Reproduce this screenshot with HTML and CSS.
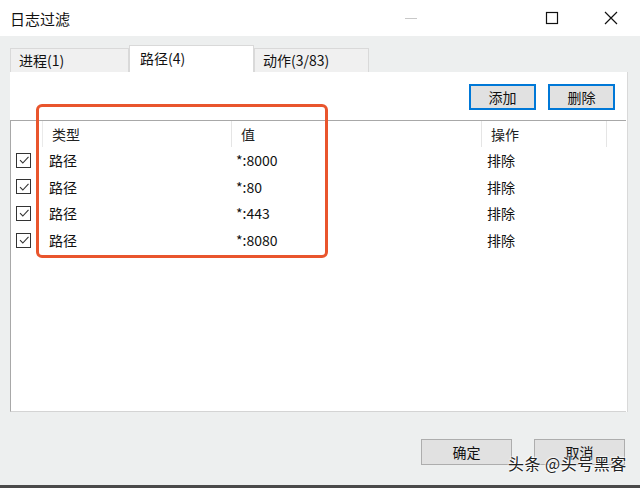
FILE: index.html
```html
<!DOCTYPE html>
<html>
<head>
<meta charset="utf-8">
<link rel="stylesheet" href="styles.css">
</head>
<body>
<div class="window">
  <div class="titlebar">
    <div class="title">日志过滤</div>
    <div class="controls">
      <span class="ctl min"><svg width="14" height="14" viewBox="0 0 14 14"><path d="M1 7.5H13" stroke="#c8c8c8" stroke-width="1"/></svg></span>
      <span class="ctl max"><svg width="14" height="14" viewBox="0 0 14 14"><rect x="1.5" y="1.5" width="11" height="11" fill="none" stroke="#111" stroke-width="1.2"/></svg></span>
      <span class="ctl close"><svg width="16" height="16" viewBox="0 0 16 16"><path d="M2 2L14 14M14 2L2 14" stroke="#111" stroke-width="1.2"/></svg></span>
    </div>
  </div>
  <div class="body">
    <div class="tabs">
      <div class="tab">进程(1)</div>
      <div class="tab active">路径(4)</div>
      <div class="tab">动作(3/83)</div>
    </div>
    <div class="panel">
      <div class="toolbar">
        <button class="btn blue">添加</button>
        <button class="btn blue">删除</button>
      </div>
      <div class="list">
        <div class="row head">
          <div class="c0"></div>
          <div class="c1">类型</div>
          <div class="c2">值</div>
          <div class="c3">操作</div>
          <div class="c4"></div>
        </div>
        <div class="row">
          <div class="c0"><span class="cb"><svg width="12" height="12" viewBox="0 0 12 12"><path d="M2 6.2L4.8 9L10.5 2.8" fill="none" stroke="#333" stroke-width="1.1"/></svg></span></div>
          <div class="c1">路径</div><div class="c2">*:8000</div><div class="c3">排除</div><div class="c4"></div>
        </div>
        <div class="row">
          <div class="c0"><span class="cb"><svg width="12" height="12" viewBox="0 0 12 12"><path d="M2 6.2L4.8 9L10.5 2.8" fill="none" stroke="#333" stroke-width="1.1"/></svg></span></div>
          <div class="c1">路径</div><div class="c2">*:80</div><div class="c3">排除</div><div class="c4"></div>
        </div>
        <div class="row">
          <div class="c0"><span class="cb"><svg width="12" height="12" viewBox="0 0 12 12"><path d="M2 6.2L4.8 9L10.5 2.8" fill="none" stroke="#333" stroke-width="1.1"/></svg></span></div>
          <div class="c1">路径</div><div class="c2">*:443</div><div class="c3">排除</div><div class="c4"></div>
        </div>
        <div class="row">
          <div class="c0"><span class="cb"><svg width="12" height="12" viewBox="0 0 12 12"><path d="M2 6.2L4.8 9L10.5 2.8" fill="none" stroke="#333" stroke-width="1.1"/></svg></span></div>
          <div class="c1">路径</div><div class="c2">*:8080</div><div class="c3">排除</div><div class="c4"></div>
        </div>
      </div>
      <div class="highlight"></div>
    </div>
    <div class="footer">
      <button class="btn gray">确定</button>
      <button class="btn gray">取消</button>
    </div>
    <div class="watermark">头条 @头号黑客</div>
  </div>
</div>
</body>
</html>
```

FILE: styles.css
```css
* { box-sizing: border-box; }
html, body { margin: 0; padding: 0; }
body {
  width: 640px;
  height: 488px;
  overflow: hidden;
  font-family: "Noto Sans CJK SC", "Liberation Sans", sans-serif;
  font-size: 14px;
  color: #111;
  background: #edefef;
}
.window {
  width: 640px;
  height: 488px;
  display: flex;
  flex-direction: column;
  border-bottom: 3px solid #4a4a4a;
}
.titlebar {
  height: 36px;
  background: #fff;
  display: flex;
  align-items: center;
  justify-content: space-between;
  padding-left: 10px;
  flex-shrink: 0;
}
.title { font-size: 15px; color: #111; }
.controls { display: flex; align-items: center; height: 100%; }
.ctl { display: flex; align-items: center; justify-content: center; }
.ctl.min { width: 14px; margin-right: 127px; }
.ctl.max { width: 14px; margin-right: 44px; }
.ctl.close { width: 16px; margin-right: 21px; }
.body {
  position: relative;
  flex: 1;
  display: flex;
  flex-direction: column;
}
.tabs {
  display: flex;
  align-items: flex-end;
  padding-left: 10px;
  margin-top: 9px;
  height: 27px;
}
.tab {
  height: 24px;
  border: 1px solid #d9d9d9;
  border-bottom: none;
  background: #f0f0f0;
  font-size: 14px;
  line-height: 22px;
  padding-left: 8px;
}
.tab:nth-child(1) { width: 119px; }
.tab:nth-child(2) { width: 125px; }
.tab:nth-child(3) { width: 115px; }
.tab.active {
  height: 27px;
  background: #fff;
  line-height: 24px;
  padding-left: 10px;
}
.panel {
  position: relative;
  margin-left: 10px;
  width: 618px;
  height: 340px;
  background: #fff;
  border-right: 1px solid #d9d9d9;
  display: flex;
  flex-direction: column;
}
.toolbar {
  height: 48px;
  display: flex;
  justify-content: flex-end;
  align-items: flex-start;
  padding-top: 12px;
  padding-right: 12px;
  gap: 12px;
}
.btn {
  font-family: "Noto Sans CJK SC", "Liberation Sans", sans-serif;
  font-size: 14px;
  color: #111;
  padding: 0;
  background: #e1e1e1;
}
.btn.blue {
  width: 67px;
  height: 26px;
  border: 2px solid #0078d7;
}
.list {
  flex: 1;
  border-top: 1px solid #a8a8a8;
  border-left: 1px solid #a8a8a8;
  border-bottom: 1px solid #d4d4d4;
  margin-right: 1px;
}
.row {
  display: flex;
  height: 26.6px;
  align-items: center;
}
.row.head { height: 26px; }
.row > div { height: 100%; display: flex; align-items: center; }
.c0 { width: 32px; justify-content: flex-start; padding-left: 5px; }
.c1 { width: 189px; padding-left: 6px; }
.c2 { width: 250px; padding-left: 4px; }
.c3 { width: 125px; padding-left: 5px; }
.c4 { flex: 1; }
.head .c0 { border-right: 1px solid #eaeaea; }
.head .c1 { border-right: 1px solid #e5e5e5; padding-left: 9px; }
.head .c2 { border-right: 1px solid #e5e5e5; padding-left: 9px; }
.head .c3 { border-right: 1px solid #e5e5e5; padding-left: 9px; }
.head > div { color: #222; }
.cb {
  width: 15px;
  height: 15px;
  border: 1px solid #333;
  display: flex;
  align-items: center;
  justify-content: center;
  background: #fff;
}
.highlight {
  position: absolute;
  left: 26px;
  top: 32px;
  width: 292px;
  height: 154px;
  border: 3px solid #e9552d;
  border-radius: 6px;
  pointer-events: none;
}
.footer {
  display: flex;
  justify-content: flex-end;
  gap: 22px;
  padding-right: 15px;
  margin-top: 27px;
}
.btn.gray {
  width: 91px;
  height: 26px;
  border: 1px solid #adadad;
}
.watermark {
  position: absolute;
  left: 508px;
  top: 415px;
  font-size: 16px;
  color: #222;
  letter-spacing: 0.5px;
  text-shadow: 0 0 2px #fff, 0 0 2px #fff, 0 0 3px #fff;
}
```
